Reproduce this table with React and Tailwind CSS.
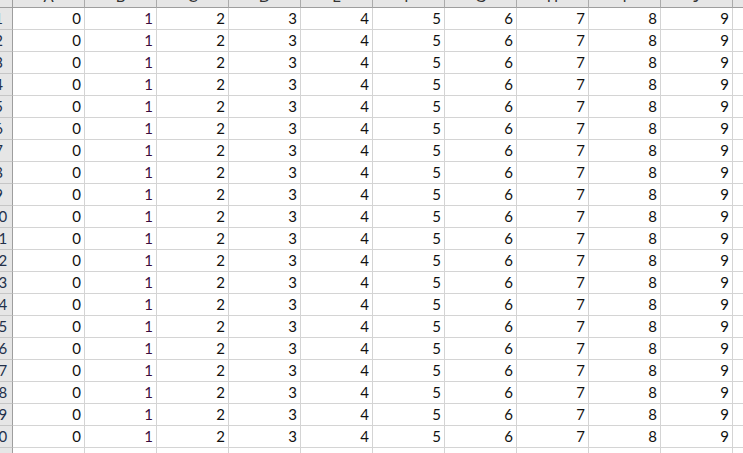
const COLUMNS = ['A', 'B', 'C', 'D', 'E', 'F', 'G', 'H', 'I', 'J']
const ROWS = Array.from({ length: 21 }, (_, i) => i + 1)

export default function App() {
  return (
    <div
      className="w-[743px] h-[453px] overflow-hidden bg-white text-black"
      style={{ fontFamily: 'Lato, "Open Sans", sans-serif' }}
    >
      <div className="ml-[-14px] mt-[-14px] w-[800px]">
        {/* column headers */}
        <div className="flex h-[22px]">
          <div className="w-[27px] shrink-0 bg-[#e6e6e6] border-r border-b border-[#9e9e9e]" />
          {COLUMNS.map((c) => (
            <div
              key={c}
              className="w-[72px] shrink-0 bg-[#e6e6e6] border-r border-b border-r-[#ababab] border-b-[#9e9e9e] flex items-end justify-center pb-[3px] text-[15px] leading-[15px] text-[#333]"
            >
              {c}
            </div>
          ))}
          <div className="flex-1 bg-[#e6e6e6] border-b border-[#9e9e9e]" />
        </div>

        {/* data rows */}
        {ROWS.map((r) => (
          <div key={r} className="flex h-[22px]">
            <div className="w-[27px] shrink-0 bg-[#e6e6e6] border-r border-b border-r-[#9e9e9e] border-b-[#c6c6c6] flex items-end justify-center pr-[1px] pb-[3px] text-[15px] leading-[15px] text-[#22304a]">
              {r}
            </div>
            {COLUMNS.map((c, i) => (
              <div
                key={c}
                className={
                  'w-[72px] shrink-0 border-r border-b border-[#d4d4d4] flex items-end justify-end pr-[3px] pb-[3px] text-[15px] leading-[15px] ' +
                  (i === 1 ? 'text-[#3a0c3c]' : 'text-[#111]')
                }
              >
                {i}
              </div>
            ))}
            <div className="flex-1 border-b border-[#d4d4d4]" />
          </div>
        ))}
      </div>
    </div>
  )
}
